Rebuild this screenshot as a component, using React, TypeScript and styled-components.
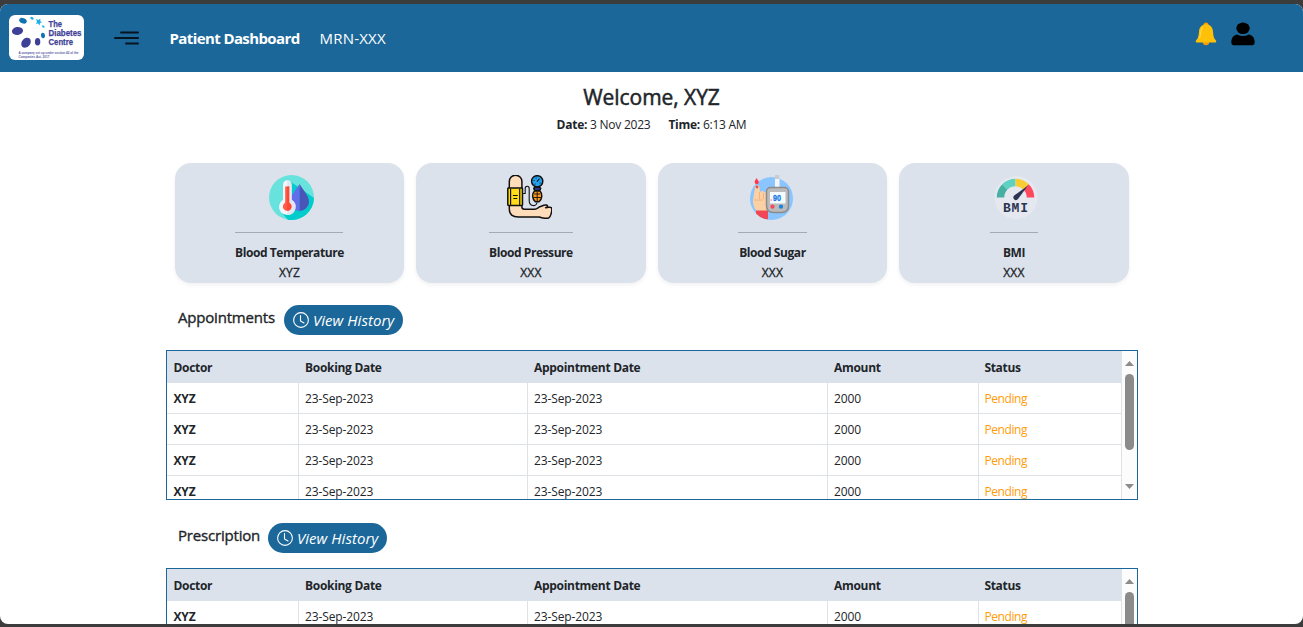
import React from 'react';
import styled, { createGlobalStyle } from 'styled-components';

const BLUE = '#1b6799';
const PALE = '#dce2ec';

const GlobalStyle = createGlobalStyle`
  * { box-sizing: border-box; }
  html, body { margin: 0; height: 100%; overflow: hidden; background: #3c3c3c; }
  body { font-family: 'Open Sans', 'Noto Sans', sans-serif; font-size: 12px; color: #212529; }
`;

const Frame = styled.div`
  height: 627px;
  padding: 4px 0 3px;
  background: #3c3c3c;
`;
const Page = styled.div`
  height: 620px;
  overflow: hidden;
  background: #fff;
  border-radius: 8px;
`;
const Header = styled.header`
  height: 68px;
  display: flex;
  align-items: center;
  background: ${BLUE};
  color: #fff;
  padding: 0 48px 0 9px;
`;
const Logo = styled.svg`
  width: 75px;
  height: 45px;
  margin: 0 30px 1px 0;
`;
const MenuIcon = styled.svg`
  width: 25px;
  height: 14px;
  margin-right: 30.5px;
`;
const Title = styled.span`
  font-size: 15px;
  font-weight: 700;
  letter-spacing: -0.6px;
  width: 150px;
  white-space: nowrap;
`;
const Mrn = styled.span`
  font-size: 15px;
  letter-spacing: 0.2px;
`;
const HeaderIcons = styled.div`
  margin-left: auto;
  display: flex;
  gap: 14px;
  padding-bottom: 8px;
`;
const Greeting = styled.h1`
  margin: 8px 0 1px;
  font-size: 21px;
  line-height: 34px;
  font-weight: 500;
  letter-spacing: -0.05px;
  -webkit-text-stroke: 0.5px currentColor;
  text-align: center;
`;
const Stamp = styled.div`
  display: flex;
  justify-content: center;
  gap: 18px;
  line-height: 20px;
  letter-spacing: -0.25px;
`;
const Main = styled.main`
  width: 972px;
  margin: 28px 0 0 166px;
`;
const Cards = styled.div`
  display: grid;
  grid-template-columns: repeat(4, 1fr);
  gap: 12px;
  padding: 0 9.3px 0 8.7px;
`;
const Card = styled.div`
  height: 120px;
  border-radius: 16px;
  background: ${PALE};
  box-shadow: 0 2px 4px rgba(0, 0, 0, 0.06);
  display: flex;
  flex-direction: column;
  align-items: center;
  padding-top: 12px;
`;
const CardIcon = styled.svg<{ $shift: number }>`
  width: 45px;
  height: 45px;
  flex: none;
  margin-left: ${(p) => p.$shift}px;
`;
const Rule = styled.hr<{ $w: number }>`
  width: ${(p) => p.$w}px;
  height: 1px;
  border: 0;
  margin: 12px 0 10px;
  background: #a5aab2;
`;
const CardLabel = styled.div<{ $bold?: boolean }>`
  font-weight: ${(p) => (p.$bold ? 700 : 500)};
  line-height: 20px;
  letter-spacing: ${(p) => (p.$bold ? -0.43 : 0.2)}px;
  -webkit-text-stroke: ${(p) => (p.$bold ? 0 : 0.3)}px currentColor;
`;
const SectionHead = styled.div<{ $top: number }>`
  display: flex;
  align-items: flex-start;
  gap: 9px;
  height: 30px;
  margin: ${(p) => p.$top}px 0 15px;
  padding-left: 12px;
`;
const SectionTitle = styled.h2<{ $w: number }>`
  margin: 0;
  width: ${(p) => p.$w}px;
  white-space: nowrap;
  font-size: 15px;
  line-height: 25px;
  font-weight: 500;
  letter-spacing: -0.19px;
  -webkit-text-stroke: 0.35px currentColor;
`;
const HistoryButton = styled.button`
  width: 119px;
  height: 30px;
  border: 0;
  border-radius: 15px;
  background: ${BLUE};
  color: #fff;
  display: flex;
  align-items: center;
  gap: 4px;
  padding: 0 0 0 9px;
  font: italic 15px 'Open Sans', 'Noto Sans', sans-serif;
  letter-spacing: 0.04px;
  white-space: nowrap;
`;
const TableBox = styled.div`
  height: 150px;
  border: 1px solid ${BLUE};
  display: flex;
  overflow: hidden;
`;
const Rows = styled.div`
  flex: 1;
`;
const Row = styled.div<{ $head?: boolean }>`
  display: grid;
  grid-template-columns: 132px 229px 300px 151px 1fr;
  height: ${(p) => (p.$head ? 32 : 31)}px;
  background: ${(p) => (p.$head ? PALE : '#fff')};
  border-bottom: ${(p) => (p.$head ? 0 : '1px solid #dee2e6')};
  border-right: 1px solid ${(p) => (p.$head ? PALE : '#dee2e6')};
  font-weight: ${(p) => (p.$head ? 700 : 400)};
`;
const Cell = styled.div<{ $head?: boolean; $strong?: boolean; $pending?: boolean; $last?: boolean }>`
  padding-left: ${(p) => (p.$strong ? 6.5 : p.$last ? 5.4 : 6)}px;
  line-height: ${(p) => (p.$head ? 33 : 31)}px;
  letter-spacing: ${(p) => (p.$head ? -0.3 : p.$pending ? -0.4 : -0.13)}px;
  font-weight: ${(p) => (p.$strong ? 700 : 'inherit')};
  color: ${(p) => (p.$pending ? '#ff9c07' : 'inherit')};
  border-right: ${(p) => (p.$head || p.$last ? 0 : '1px solid #dee2e6')};
`;
const ScrollBar = styled.div`
  width: 15px;
  background: #fcfcfc;
  display: flex;
  flex-direction: column;
  align-items: center;
  padding: 10px 0;
`;
const Arrow = styled.svg`
  width: 9px;
  height: 5px;
`;
const Thumb = styled.div`
  width: 9px;
  height: 76px;
  margin: 8px 0 auto;
  border-radius: 5px;
  background: #8b8b8b;
`;

const DiabetesLogo = () => (
  <Logo viewBox="0 0 75 45">
    <rect width="75" height="45" rx="6" fill="#fff" />
    <g fill="#3e3f96">
      <ellipse cx="8.5" cy="16" rx="5.6" ry="4" transform="rotate(-8 8.5 16)" />
      <ellipse cx="17" cy="27.7" rx="5.5" ry="4.2" transform="rotate(-50 17 27.7)" />
      <ellipse cx="28.6" cy="26.7" rx="2.7" ry="3.8" />
    </g>
    <g fill="#0e72b5">
      <ellipse cx="14" cy="5.7" rx="3.9" ry="2.7" transform="rotate(20 14 5.7)" />
      <ellipse cx="34" cy="20.5" rx="2" ry="2.8" transform="rotate(-12 34 20.5)" />
    </g>
    <g fill="#19b0e7">
      <ellipse cx="23" cy="3.2" rx="1.8" ry="1.3" transform="rotate(35 23 3.2)" />
      <path d="M27 4l2.2 1 2.2-1.2-.1 2.4 1.7 1-2 .8-.4 2.4-1.5-1.8-2.3.2 1.2-2z" />
      <ellipse cx="34.3" cy="11.5" rx="1.4" ry="1" transform="rotate(40 34.3 11.5)" />
    </g>
    <g fill="#3e3f96" fontFamily="'Liberation Sans', sans-serif" fontWeight="700">
      <g stroke="#3e3f96" strokeWidth=".25">
        <text x="39.5" y="11.500" fontSize="9.500" textLength="13.500" lengthAdjust="spacingAndGlyphs">The</text>
        <text x="39.5" y="20.500" fontSize="9.500" textLength="33" lengthAdjust="spacingAndGlyphs">Diabetes</text>
        <text x="39.5" y="29.500" fontSize="9.500" textLength="24.500" lengthAdjust="spacingAndGlyphs">Centre</text>
      </g>
      <g fontSize="3.4" opacity=".85">
        <text x="9.5" y="39" textLength="60" lengthAdjust="spacingAndGlyphs">A company set up under section 42 of the</text>
        <text x="9.5" y="43.2" textLength="31" lengthAdjust="spacingAndGlyphs">Companies Act, 2017</text>
      </g>
    </g>
  </Logo>
);

const TemperatureIcon = () => (
  <CardIcon viewBox="0 0 45 45" $shift={4}>
    <circle cx="22.5" cy="22.5" r="22.5" fill="#67e2dc" />
    <path d="M22 7L45 23A22.5 22.5 0 0 1 19 44.7L13 38z" fill="#00cccb" />
    <path d="M30.5 9C26 16 21 21 21 27a9.5 9 0 0 0 9.5 9z" fill="#646ceb" />
    <path d="M30.5 9C35 16 40 21 40 27a9.5 9 0 0 1-9.5 9z" fill="#4a55b8" />
    <path d="M14 9.500a4.300 4.300 0 0 1 8.600 0v15.200a8.300 8.300 0 1 1-8.600 0z" fill="#f3f5fa" />
    <path d="M18.300 5.200a4.300 4.300 0 0 1 4.300 4.300v15.200a8.300 8.300 0 0 1-4.300 15.400z" fill="#e1e6f0" />
    <path d="M16.200 11.500h4v16.200a4.300 4.300 0 1 1-4 0z" fill="#ff5b46" />
    <path d="M18.200 11.500h2v16.200a4.300 4.300 0 0 1-2 8.100z" fill="#fd4633" />
  </CardIcon>
);

const PressureIcon = () => (
  <CardIcon viewBox="0 0 45 45" $shift={-3}>
    <g stroke="#111" strokeWidth="1.5" strokeLinejoin="round" strokeLinecap="round">
      <path d="M2.300 13V6.500a6.300 6.300 0 0 1 12.600 0V32c0 1.500 1 2.200 2.500 2.200h10.500c2 0 3-1.500 5-2.500l4-1.400c1.800-.5 3.500-.5 3.700.7 0 1-1 1.500-2 1.700 2.500-.7 6-.8 6.200.8.200 3-1 8.200-3 9.300-1.500.8-6.500.5-9.500-.8H11.500C5.500 42 2.300 39.500 2.300 34z" fill="#ffdcba" />
      <path d="M16.500 18.500h1.700V13.500c0-3 4-3 4 0v12c0 6 7 6.500 7.700 2.500" fill="none" strokeWidth="1.100" />
      <rect x=".8" y="13" width="14.700" height="17.500" rx=".7" fill="#ffdb19" />
      <path d="M3.600 14v15.500M12.700 14v15.500M6.300 20.500h4M6.800 23.500h3" fill="none" strokeWidth="1.200" />
      <circle cx="30.200" cy="6.300" r="5.600" fill="#24a1ee" />
      <path d="M30.200 6.300l2-2.300M27 5.500h.1M29 3h.1M33 8h.1M28 9h.1" fill="none" strokeWidth="1.100" />
      <path d="M27.700 12.200h5l1 1.300-1 2h-5l-1-2z" fill="#2b3c8c" />
      <path d="M27.500 16h5.500c2.800 2.800 2.300 8-1 10.800h-3.500c-3.500-2.800-3.800-8-1-10.800z" fill="#ff9c20" />
      <path d="M30.200 17v9M27.500 19h5.500M27 22.500h6.500" fill="none" strokeWidth=".9" />
    </g>
  </CardIcon>
);

const SugarIcon = () => (
  <CardIcon viewBox="0 0 45 45" $shift={-2}>
    <circle cx="22.500" cy="23.500" r="21.500" fill="#8ac5ff" />
    <path d="M6 12.500c0-3.500 4.500-3.500 4.500 0l.5 5c1.500-2.200 4-1.500 4.200 0 1-1.200 3.200-1 3.700.5V36H7.500C5 33 3.800 29 4 25z" fill="#fbd0a5" />
    <path d="M10.500 17v7M14.500 18v6M5 25h9" stroke="#f0af7a" strokeWidth=".9" fill="none" />
    <path d="M7 35.500h12v8.800Q12 44 7 38.500z" fill="#f14655" />
    <path d="M7.500 3l2 3c1.500 4-4.500 4.500-3.700.2z" fill="#ff3850" />
    <circle cx="8" cy="12" r="1.400" fill="#ed4d50" />
    <rect x="26" y="0" width="4.500" height="13" fill="#f5f6f8" />
    <rect x="26" y="0" width="4.500" height="4" fill="#c9cbd0" />
    <path d="M21.500 12.500h14a4 4 0 0 1 4 4v14q0 7-7 7h-8q-7 0-7-7V16.500a4 4 0 0 1 4-4z" fill="#bbb" stroke="#8b8b8b" strokeWidth="1.500" />
    <rect x="21" y="17" width="15.500" height="11.500" fill="#f4fbff" />
    <text x="24" y="26" fontFamily="'Liberation Sans', sans-serif" fontSize="8.500" fontWeight="700" fill="#1479e5" stroke="#1479e5" strokeWidth=".3" textLength="8" lengthAdjust="spacingAndGlyphs">90</text>
    <path d="M21.500 25h1.500" stroke="#ef6574" strokeWidth="1.200" />
    <circle cx="23.500" cy="31.700" r="2.100" fill="#f74861" />
    <circle cx="32" cy="31.700" r="2.100" fill="#1783db" />
  </CardIcon>
);

const BmiIcon = () => (
  <CardIcon viewBox="0 0 45 45" $shift={5}>
    <circle cx="22" cy="22.500" r="21.500" fill="#e5e9ef" />
    <g fill="none" strokeWidth="7.500">
      <path d="M6.500 22.500A15 15 0 0 1 10.900 11.900" stroke="#46b0a3" />
      <path d="M10.900 11.900A15 15 0 0 1 21.500 7.500" stroke="#5dd2c3" />
      <path d="M21.500 7.500A15 15 0 0 1 32.100 11.900" stroke="#f9cd31" />
      <path d="M32.100 11.900A15 15 0 0 1 36.500 22.500" stroke="#ff475d" />
    </g>
    <path d="M34 10.500L24.200 23.800a2.600 2.600 0 1 1-4-3.200z" fill="#2b3551" />
    <text x="9" y="37.300" fontFamily="'Liberation Mono', monospace" fontSize="13" fontWeight="700" fill="#2b3551" textLength="25">BMI</text>
  </CardIcon>
);

const Clock = () => (
  <svg width="16" height="16" viewBox="0 0 16 16" fill="none" stroke="#fff" strokeLinecap="round">
    <circle cx="8" cy="8" r="7.400" strokeWidth="1.100" />
    <path d="M7.500 3.500V9l3.500 2" strokeWidth="1.100" />
  </svg>
);

const metrics = [
  { label: 'Blood Temperature', value: 'XYZ', rule: 108, icon: <TemperatureIcon /> },
  { label: 'Blood Pressure', value: 'XXX', rule: 84, icon: <PressureIcon /> },
  { label: 'Blood Sugar', value: 'XXX', rule: 69, icon: <SugarIcon /> },
  { label: 'BMI', value: 'XXX', rule: 48, icon: <BmiIcon /> },
];
const columns = ['Doctor', 'Booking Date', 'Appointment Date', 'Amount', 'Status'];
const records = Array.from({ length: 4 }, () => ['XYZ', '23-Sep-2023', '23-Sep-2023', '2000', 'Pending']);

const Records = () => (
  <TableBox>
    <Rows>
      <Row $head>
        {columns.map((c, i) => <Cell key={c} $head $strong={i === 0} $last={i === 4}>{c}</Cell>)}
      </Row>
      {records.map((r, n) => (
        <Row key={n}>
          {r.map((v, i) => <Cell key={i} $strong={i === 0} $pending={i === 4} $last={i === 4}>{v}</Cell>)}
        </Row>
      ))}
    </Rows>
    <ScrollBar>
      <Arrow viewBox="0 0 9 5"><path d="M0 5L4.500 0 9 5z" fill="#8b8b8b" /></Arrow>
      <Thumb />
      <Arrow viewBox="0 0 9 5"><path d="M0 0L4.500 5 9 0z" fill="#8b8b8b" /></Arrow>
    </ScrollBar>
  </TableBox>
);

export default function App() {
  return (
    <Frame>
      <GlobalStyle />
      <Page>
        <Header>
          <DiabetesLogo />
          <MenuIcon viewBox="0 0 25 14" fill="none" stroke="#071521" strokeWidth="2" strokeLinecap="round">
            <path d="M7 1.500h17M1 7h23M12 12.500h12" />
          </MenuIcon>
          <Title>Patient Dashboard</Title>
          <Mrn>MRN-XXX</Mrn>
          <HeaderIcons>
            <svg width="22" height="24" viewBox="0 0 22 24">
              <circle cx="11" cy="3" r="2.500" fill="#ff9800" />
              <circle cx="11" cy="20" r="3.200" fill="#ff9800" />
              <path d="M11 2.200c-4 0-6.700 3-7 7-.4 5-.7 7-2.600 8.800-.9.900-1 2.500.3 2.500h18.600c1.300 0 1.200-1.600.3-2.500C18.700 16.200 18.400 14.200 18 9.200c-.3-4-3-7-7-7z" fill="#ffc107" />
              <path d="M8 5C5.500 7 6.300 12 4.500 16" stroke="#ffdc55" strokeWidth="1" fill="none" />
            </svg>
            <svg width="24" height="24" viewBox="0 0 24 24">
              <ellipse cx="12" cy="6.300" rx="6.700" ry="5.800" />
              <path d="M6 12.500q6 3 12 0c3.800.8 5.500 3.600 5.700 7.500 0 2-.7 3.200-2.300 3.200H2.600C1 23.200.3 22 .3 20c.2-3.900 1.900-6.700 5.700-7.500z" />
            </svg>
          </HeaderIcons>
        </Header>
        <Greeting>Welcome, XYZ</Greeting>
        <Stamp>
          <span><b>Date:</b> 3 Nov 2023</span>
          <span><b>Time:</b> 6:13 AM</span>
        </Stamp>
        <Main>
          <Cards>
            {metrics.map((m) => (
              <Card key={m.label}>
                {m.icon}
                <Rule $w={m.rule} />
                <CardLabel $bold>{m.label}</CardLabel>
                <CardLabel>{m.value}</CardLabel>
              </Card>
            ))}
          </Cards>
          <SectionHead $top={22}>
            <SectionTitle $w={97}>Appointments</SectionTitle>
            <HistoryButton><Clock />View History</HistoryButton>
          </SectionHead>
          <Records />
          <SectionHead $top={23}>
            <SectionTitle $w={81}>Prescription</SectionTitle>
            <HistoryButton><Clock />View History</HistoryButton>
          </SectionHead>
          <Records />
        </Main>
      </Page>
    </Frame>
  );
}
